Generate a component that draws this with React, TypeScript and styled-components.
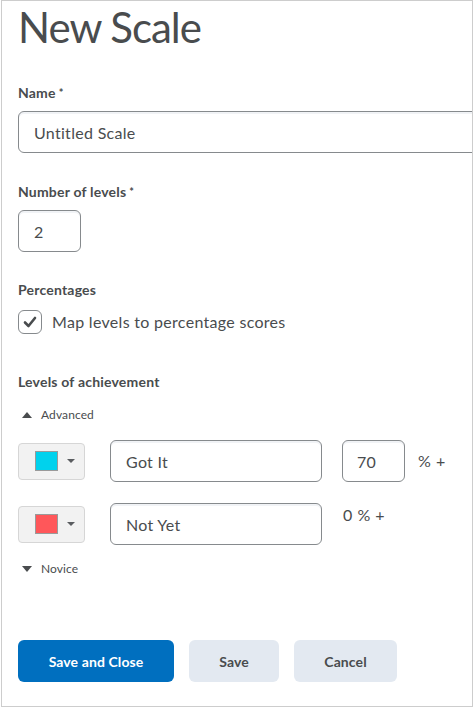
import styled, { createGlobalStyle } from 'styled-components';

const GlobalStyle = createGlobalStyle`
  html, body {
    margin: 0;
    padding: 0;
    background: #fff;
  }
  body {
    font-family: Lato, "Open Sans", sans-serif;
    color: #494c4e;
  }
  * {
    box-sizing: border-box;
  }
`;

const Frame = styled.div`
  margin-left: 1px;
  width: 472px;
  height: 707px;
  border: 1px solid #cdcdcd;
  padding: 1px 0 0 16px;
  overflow: hidden;
  display: flex;
  flex-direction: column;
`;

const Title = styled.h1`
  margin: 0;
  font-size: 42px;
  line-height: 50px;
  font-weight: 400;
  letter-spacing: -1px;
  color: #494c4e;
`;

const Section = styled.div<{ $top: number }>`
  display: flex;
  flex-direction: column;
  align-items: flex-start;
  margin-top: ${p => p.$top}px;
`;

const Label = styled.label<{ $gap?: number }>`
  font-size: 14px;
  line-height: 17px;
  font-weight: 700;
  letter-spacing: 0.2px;
  color: #494c4e;
  margin-bottom: ${p => p.$gap ?? 10}px;

  span {
    font-size: 11px;
    vertical-align: top;
    margin-left: 3px;
  }
`;

const TextInput = styled.input<{ $width: number }>`
  width: ${p => p.$width}px;
  height: 42px;
  flex: none;
  border: 1px solid #868a8d;
  border-radius: 6px;
  box-shadow: inset 0 2px 0 0 rgba(185, 194, 208, 0.2);
  padding: 0 15px;
  font-family: Lato, "Open Sans", sans-serif;
  font-size: 16px;
  letter-spacing: 0.3px;
  color: #494c4e;
  background: #fff;
  outline: none;
`;

const CheckRow = styled.label`
  display: flex;
  align-items: center;
  gap: 10px;
  font-size: 16px;
  line-height: 20px;
  letter-spacing: 0.3px;
  color: #494c4e;
`;

const CheckBox = styled.span`
  width: 24px;
  height: 24px;
  border: 1px solid #868a8d;
  border-radius: 6px;
  display: flex;
  align-items: center;
  justify-content: center;
  margin-top: 1px;
`;

const Toggle = styled.div<{ $top: number }>`
  display: flex;
  align-items: center;
  gap: 9px;
  margin-top: ${p => p.$top}px;
  padding-left: 4px;
  font-size: 12px;
  line-height: 15px;
  letter-spacing: 0.1px;
  color: #494c4e;
`;

const LevelRow = styled.div<{ $top: number }>`
  display: flex;
  align-items: center;
  margin-top: ${p => p.$top}px;
`;

const ColorButton = styled.button`
  width: 67px;
  height: 37px;
  flex: none;
  margin-right: 25px;
  border: 1px solid #d6d6d6;
  border-radius: 4px;
  background: #f2f2f2;
  display: flex;
  align-items: center;
  padding: 0 0 0 16px;
  gap: 9px;
`;

const Swatch = styled.span<{ $color: string }>`
  width: 23px;
  height: 20px;
  border: 1px solid #9a9a9a;
  background: ${p => p.$color};
`;

const Caret = styled.span`
  width: 0;
  height: 0;
  border-left: 4px solid transparent;
  border-right: 4px solid transparent;
  border-top: 4px solid #5a5d60;
`;

const PercentInput = styled(TextInput)`
  margin-left: 20px;
  padding: 0 14px;
`;

const PercentText = styled.span<{ $lead: number; $top?: boolean }>`
  margin-left: ${p => p.$lead}px;
  font-size: 16px;
  line-height: 20px;
  letter-spacing: 0.5px;
  color: #494c4e;
  align-self: ${p => (p.$top ? 'flex-start' : 'center')};
  margin-top: ${p => (p.$top ? '2px' : '0')};
`;

const ButtonBar = styled.div`
  display: flex;
  gap: 15px;
  margin-top: 64px;
`;

const Button = styled.button<{ $primary?: boolean; $width: number }>`
  width: ${p => p.$width}px;
  height: 42px;
  border: none;
  border-radius: 6px;
  font-family: Lato, "Open Sans", sans-serif;
  font-size: 14px;
  font-weight: 700;
  letter-spacing: 0.1px;
  background: ${p => (p.$primary ? '#006fbf' : '#e3e9f1')};
  color: ${p => (p.$primary ? '#fff' : '#494c4e')};
`;

const Triangle = ({ up }: { up?: boolean }) => (
  <svg width="10" height="6" viewBox="0 0 10 6">
    <path d={up ? 'M0 6 L5 0 L10 6 Z' : 'M0 0 L5 6 L10 0 Z'} fill="#494c4e" />
  </svg>
);

const App = () => {
  return (
    <Frame>
      <GlobalStyle />
      <Title>New Scale</Title>

      <Section $top={32}>
        <Label>Name<span>*</span></Label>
        <TextInput $width={470} defaultValue="Untitled Scale" />
      </Section>

      <Section $top={30}>
        <Label>Number of levels<span>*</span></Label>
        <TextInput $width={63} defaultValue="2" />
      </Section>

      <Section $top={29}>
        <Label $gap={11}>Percentages</Label>
        <CheckRow>
          <CheckBox>
            <svg width="14" height="12" viewBox="0 0 14 12">
              <path d="M2 6.5 L5.5 10 L12 2" fill="none" stroke="#494c4e" strokeWidth="2.6" strokeLinecap="round" strokeLinejoin="round" />
            </svg>
          </CheckBox>
          Map levels to percentage scores
        </CheckRow>
      </Section>

      <Section $top={39}>
        <Label $gap={0}>Levels of achievement</Label>
        <Toggle $top={17}>
          <Triangle up />
          Advanced
        </Toggle>

        <LevelRow $top={18}>
          <ColorButton>
            <Swatch $color="#00d2ed" />
            <Caret />
          </ColorButton>
          <TextInput $width={212} defaultValue="Got It" />
          <PercentInput $width={63} defaultValue="70" />
          <PercentText $lead={13}>% +</PercentText>
        </LevelRow>

        <LevelRow $top={21}>
          <ColorButton>
            <Swatch $color="#ff575a" />
            <Caret />
          </ColorButton>
          <TextInput $width={212} defaultValue="Not Yet" />
          <PercentText $lead={21} $top>0 % +</PercentText>
        </LevelRow>

        <Toggle $top={16}>
          <Triangle />
          Novice
        </Toggle>
      </Section>

      <ButtonBar>
        <Button $primary $width={156}>Save and Close</Button>
        <Button $width={90}>Save</Button>
        <Button $width={103}>Cancel</Button>
      </ButtonBar>
    </Frame>
  );
};

export default App;
